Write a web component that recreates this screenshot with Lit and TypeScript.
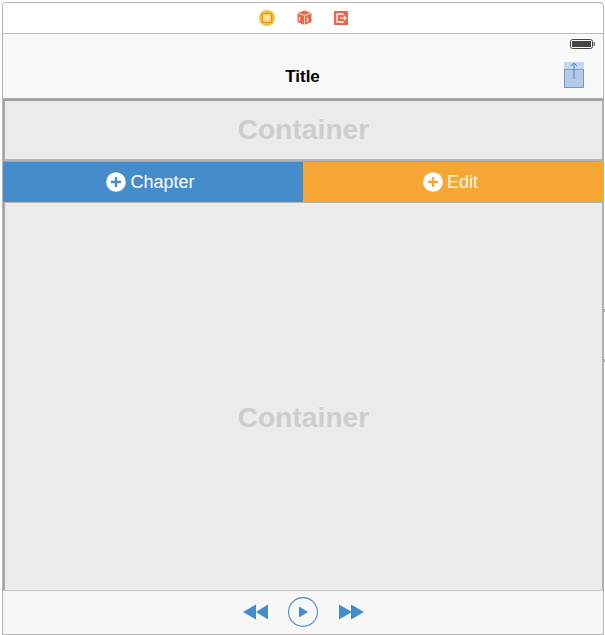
import { LitElement, html, css } from "lit";
import { customElement } from "lit/decorators.js";

@customElement("app-root")
export class AppRoot extends LitElement {
  static styles = css`
    :host { display: block; width: 605px; height: 635px; background: #fff; font-family: "Liberation Sans", Arial, sans-serif; overflow: hidden; }
    .frame { box-sizing: border-box; height: 633px; margin: 2px 0 0 2px; width: 602px; border: 1px solid #b4b4b4; border-radius: 4px 4px 0 0; display: flex; flex-direction: column; position: relative; }
    .dock { height: 31px; flex: none; display: flex; align-items: center; justify-content: center; gap: 22px; border-bottom: 1px solid #bdbdbd; box-sizing: border-box; padding: 0 0 1px 0; }
    .dock svg { display: block; }
    .nav { height: 65px; flex: none; box-sizing: border-box; background: #f8f8f8; border-bottom: 1px solid #a8a8a8; display: flex; flex-direction: column; position: relative; }
    .status { height: 19px; display: flex; justify-content: flex-end; align-items: center; padding: 0 8px 0 0; }
    .title { text-align: center; font-size: 17px; font-weight: 700; color: #000; line-height: 18px; margin-top: 15px; padding-right: 1px; }
    .share { position: absolute; right: 19px; top: 28px; }
    .container { box-sizing: border-box; background: #ebebeb; border: 2px solid #a6a6a6; border-right-color: #b0b0b0; margin-right: -1px; display: flex; align-items: center; justify-content: center; color: #cdcdcd; font-size: 28px; letter-spacing: .1px; font-weight: 700; }
    .c1 { height: 62px; flex: none; border-bottom-color: #b5b5b5; border-top-color: #a0a0a0; }
    .c2 { flex: 1; border-top: none; border-bottom: none; padding-top: 43px; }
    .btns { height: 42px; flex: none; display: flex; box-sizing: border-box; border-top: 1px solid #a5a5a5; border-bottom: 1px solid #b5b5b5; margin-right: -1px; }
    .btn { display: flex; align-items: center; justify-content: center; gap: 4px; color: #fff; font-size: 18px; flex: 1; }
    .blue { background: #458ccb; flex: 0 0 300px; padding-right: 5px; box-sizing: border-box; }
    .orange { background: #f6a635; padding-right: 6px; color: #fff8e8; }
    .toolbar { height: 44px; flex: none; box-sizing: border-box; background: #f7f7f7; border-top: 1px solid #c4c4c4; display: flex; align-items: center; justify-content: center; gap: 11.5px; padding: 0 0 1px 0; }
    .toolbar svg { display: block; }
    .tick { position: absolute; right: -2px; width: 1px; height: 3px; background: #b0b0b0; }
    .t1 { top: 306px; }
    .t2 { top: 356px; }
  `;

  plus(color: string) {
    return html`<svg width="20" height="20" viewBox="0 0 20 20" aria-hidden="true">
      <circle cx="10" cy="10" r="9.8" fill="#fff"></circle>
      <path d="M10 5v10M5 10h10" stroke=${color} stroke-width="2.3"></path>
    </svg>`;
  }

  render() {
    return html`<div class="frame">
      <div class="dock">
        <svg width="16" height="16" viewBox="0 0 16 16">
          <circle cx="8" cy="8" r="8" fill="#f5bf3d"></circle>
          <rect x="3.5" y="3.5" width="9" height="9" fill="#f9d77e" stroke="#d99a1e" stroke-width="1.2"></rect>
          <rect x="6" y="6" width="4" height="4" fill="#fbe6a8"></rect>
        </svg>
        <svg width="15" height="15" viewBox="0 0 15 15">
          <path d="M7.5 0.5 14.5 3v9l-7 3-7-3V3z" fill="#e8694f"></path>
          <path d="M.5 3 7.5 5.5 14.5 3M7.5 5.5V15" stroke="#fbd9cf" stroke-width="1" fill="none"></path>
          <path d="M2.5 7v3.5M10.5 7.5V12" stroke="#fff" stroke-width="1.2"></path>
        </svg>
        <svg width="14" height="14" viewBox="0 0 14 14">
          <rect width="14" height="14" fill="#e8694a"></rect>
          <path d="M9 4V3H3v8h6v-1" fill="none" stroke="#fff" stroke-width="1.3"></path>
          <path d="M6 7h6M10 5l2 2-2 2" fill="none" stroke="#fff" stroke-width="1.1"></path>
        </svg>
      </div>
      <div class="nav">
        <div class="status">
          <svg width="25" height="10" viewBox="0 0 25 10">
            <rect x=".5" y=".5" width="22" height="9" rx="2" fill="none" stroke="#444"></rect>
            <rect x="2" y="2" width="19" height="6" fill="#444"></rect>
            <rect x="23.5" y="3" width="1.5" height="4" fill="#777"></rect>
          </svg>
        </div>
        <div class="title">Title</div>
        <svg class="share" width="20" height="26" viewBox="0 0 20 26">
          <rect x=".5" y="7.5" width="19" height="18" fill="#b3cbe8" stroke="#6f9bd0"></rect>
          <rect x="0" y="0" width="20" height="7" fill="#c4d7ee"></rect>
          <path d="M10 17V1M7 4l3-3 3 3" fill="none" stroke="#4f86c6" stroke-width="1"></path>
        </svg>
      </div>
      <div class="container c1">Container</div>
      <div class="btns">
        <div class="btn blue">${this.plus("#458ccb")}<span>Chapter</span></div>
        <div class="btn orange">${this.plus("#f6a635")}<span>Edit</span></div>
      </div>
      <div class="container c2">Container</div>
      <div class="toolbar">
        <svg width="34" height="16" viewBox="0 0 34 16">
          <path d="M13 .5v15L0 8zM25 .5v15L13 8z" fill="#458ccb"></path>
        </svg>
        <svg width="30" height="30" viewBox="0 0 30 30">
          <circle cx="15" cy="15" r="14.4" fill="none" stroke="#458ccb" stroke-width="1.1"></circle>
          <path d="M11 9.5v11l9-5.5z" fill="#458ccb"></path>
        </svg>
        <svg width="34" height="16" viewBox="0 0 34 16">
          <path d="M9 .5v15L22 8zM21 .5v15L34 8z" fill="#458ccb"></path>
        </svg>
      </div>
      <span class="tick t1"></span>
      <span class="tick t2"></span>
    </div>`;
  }
}
